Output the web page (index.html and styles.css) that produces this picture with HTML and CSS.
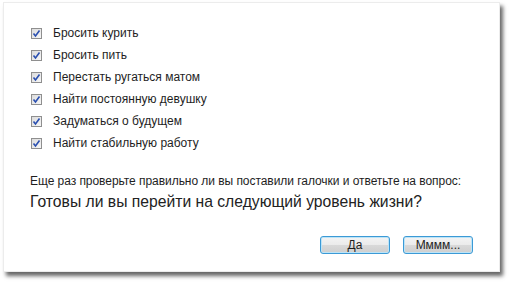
FILE: index.html
```html
<!DOCTYPE html>
<html lang="ru">
<head>
    <meta charset="UTF-8">
    <title>Готовы?</title>
    <link rel="stylesheet" href="styles.css">
</head>
<body>
    <div class="dialog">
        <ul class="checklist">
            <li class="check-row"><span class="checkbox"><svg width="9" height="9" viewBox="0 0 9 9"><path d="M1.5 4.5 3.5 7 7.5 1.5" fill="none" stroke="#2a4fb0" stroke-width="1.6"/></svg></span>Бросить курить</li>
            <li class="check-row"><span class="checkbox"><svg width="9" height="9" viewBox="0 0 9 9"><path d="M1.5 4.5 3.5 7 7.5 1.5" fill="none" stroke="#2a4fb0" stroke-width="1.6"/></svg></span>Бросить пить</li>
            <li class="check-row"><span class="checkbox"><svg width="9" height="9" viewBox="0 0 9 9"><path d="M1.5 4.5 3.5 7 7.5 1.5" fill="none" stroke="#2a4fb0" stroke-width="1.6"/></svg></span>Перестать ругаться матом</li>
            <li class="check-row"><span class="checkbox"><svg width="9" height="9" viewBox="0 0 9 9"><path d="M1.5 4.5 3.5 7 7.5 1.5" fill="none" stroke="#2a4fb0" stroke-width="1.6"/></svg></span>Найти постоянную девушку</li>
            <li class="check-row"><span class="checkbox"><svg width="9" height="9" viewBox="0 0 9 9"><path d="M1.5 4.5 3.5 7 7.5 1.5" fill="none" stroke="#2a4fb0" stroke-width="1.6"/></svg></span>Задуматься о будущем</li>
            <li class="check-row"><span class="checkbox"><svg width="9" height="9" viewBox="0 0 9 9"><path d="M1.5 4.5 3.5 7 7.5 1.5" fill="none" stroke="#2a4fb0" stroke-width="1.6"/></svg></span>Найти стабильную работу</li>
        </ul>

        <p class="hint">Еще раз проверьте правильно ли вы поставили галочки и ответьте на вопрос:</p>
        <p class="question">Готовы ли вы перейти на следующий уровень жизни?</p>

        <div class="buttons">
            <button class="btn">Да</button>
            <button class="btn">Мммм...</button>
        </div>
    </div>
</body>
</html>
```

FILE: styles.css
```css
* {
    box-sizing: border-box;
    margin: 0;
    padding: 0;
}

body {
    background: #fff;
    color: #1e1e1e;
    font-family: "Liberation Sans", Arial, sans-serif;
    width: 512px;
    height: 288px;
    overflow: hidden;
}

.dialog {
    margin: 2px 0 0 3px;
    width: 497px;
    height: 270px;
    padding: 19px 26px 0 26px;
    background: #fff;
    border: 1px solid #ececec;
    box-shadow: 3px 4px 4px rgba(0, 0, 0, 0.6);
}

.checklist {
    list-style: none;
}

.check-row {
    display: flex;
    align-items: center;
    gap: 11px;
    height: 22px;
    font-size: 12px;
}

.checkbox {
    width: 11px;
    height: 11px;
    margin-left: 1px;
    border: 1px solid #8f8f8f;
    background: linear-gradient(135deg, #dcdcdc, #f6f6f6);
    display: flex;
    align-items: center;
    justify-content: center;
}

.hint {
    margin-top: 19px;
    font-size: 12px;
    line-height: 16px;
    letter-spacing: -0.05px;
}

.question {
    margin-top: 3px;
    font-size: 15.7px;
    line-height: 20px;
    color: #222;
}

.buttons {
    margin-top: 24px;
    display: flex;
    justify-content: flex-end;
    gap: 13px;
}

.btn {
    width: 70px;
    height: 18px;
    font-family: "Liberation Sans", Arial, sans-serif;
    font-size: 12px;
    color: #1e1e1e;
    border: 1px solid #3c9ad6;
    border-radius: 3px;
    background: linear-gradient(#f4f4f4 0%, #ebebeb 50%, #d9d9d9 51%, #cfcfcf 100%);
    box-shadow: inset 0 0 0 1px #bde4f7;
}
```
